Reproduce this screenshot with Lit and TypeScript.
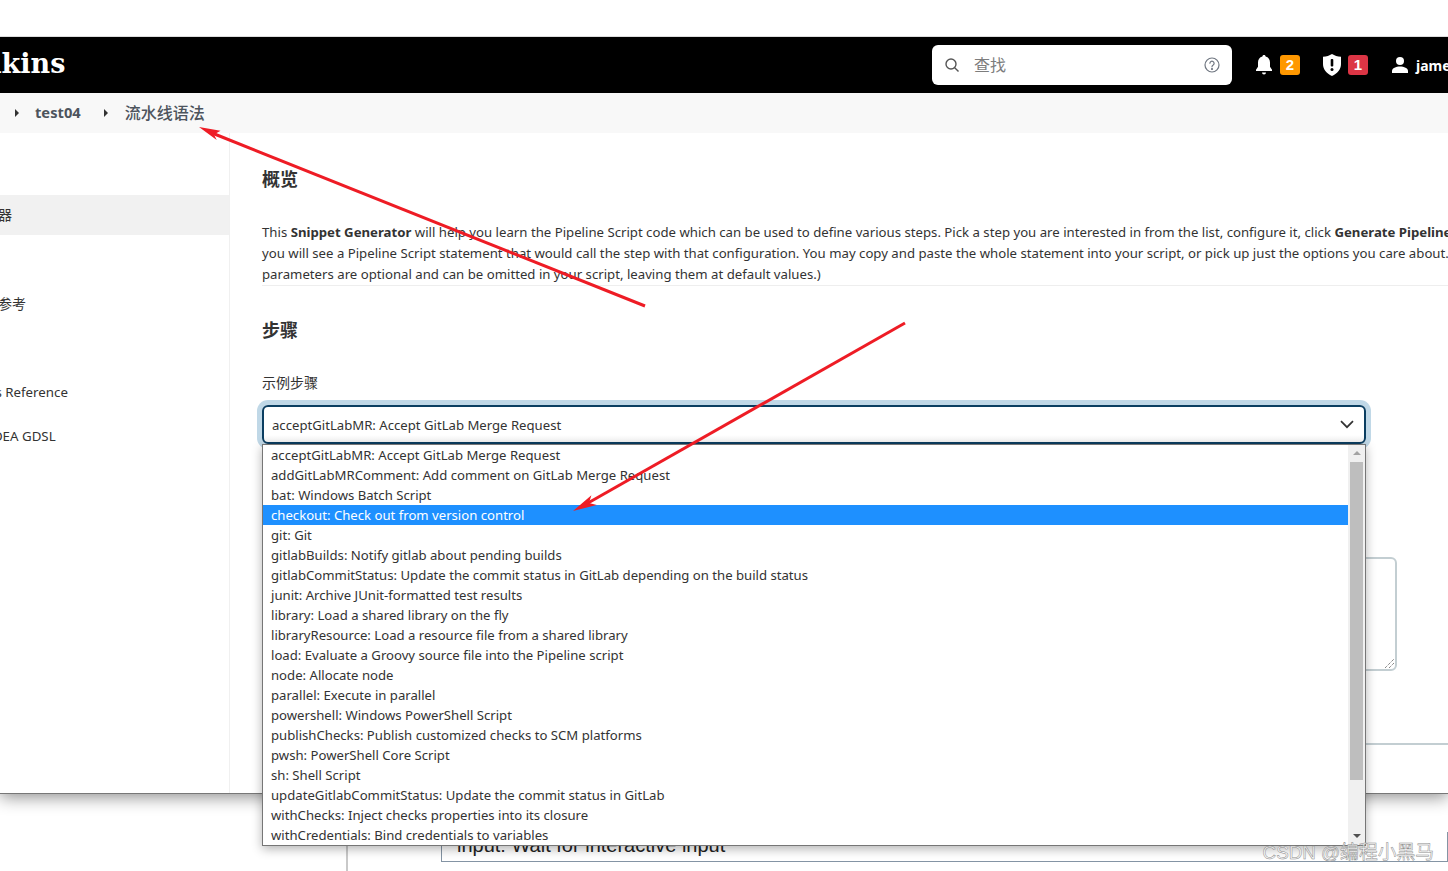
import { LitElement, html, css, svg } from "lit";
import { customElement } from "lit/decorators.js";

const STEPS = [
  "acceptGitLabMR: Accept GitLab Merge Request",
  "addGitLabMRComment: Add comment on GitLab Merge Request",
  "bat: Windows Batch Script",
  "checkout: Check out from version control",
  "git: Git",
  "gitlabBuilds: Notify gitlab about pending builds",
  "gitlabCommitStatus: Update the commit status in GitLab depending on the build status",
  "junit: Archive JUnit-formatted test results",
  "library: Load a shared library on the fly",
  "libraryResource: Load a resource file from a shared library",
  "load: Evaluate a Groovy source file into the Pipeline script",
  "node: Allocate node",
  "parallel: Execute in parallel",
  "powershell: Windows PowerShell Script",
  "publishChecks: Publish customized checks to SCM platforms",
  "pwsh: PowerShell Core Script",
  "sh: Shell Script",
  "updateGitlabCommitStatus: Update the commit status in GitLab",
  "withChecks: Inject checks properties into its closure",
  "withCredentials: Bind credentials to variables",
];

const SIDE = [
  { t: "", c: "" },
  { t: "片段生成器", c: "on" },
  { t: "步骤参考", c: "" },
  { t: "全局变量参考", c: "" },
  { t: "在线文档", c: "" },
  { t: "Examples Reference", c: "lat" },
  { t: "IntelliJ IDEA GDSL", c: "gdsl" },
];

@customElement("app-root")
export class AppRoot extends LitElement {
  static styles = css`
    :host {
      display: block;
      position: relative;
      width: 1448px;
      height: 871px;
      overflow: hidden;
      background: #fff;
      color: #333;
      font-family: "Noto Sans", "Noto Sans CJK SC", sans-serif;
      font-size: 13.15px;
    }
    .top { height: 36px; border-bottom: 1px solid #ddd; box-sizing: content-box; }
    header {
      height: 56px;
      background: #000;
      display: flex;
      align-items: center;
      color: #fff;
    }
    .logo {
      font-family: "DejaVu Serif", serif;
      font-weight: 700;
      font-size: 27px;
      margin-left: -48px;
      padding-bottom: 3px;
      white-space: nowrap;
    }
    .search {
      margin-left: auto;
      width: 300px;
      height: 40px;
      box-sizing: border-box;
      background: #fff;
      border-radius: 6px;
      display: flex;
      align-items: center;
      padding: 0 12px;
      gap: 14px;
      color: #7d7d7d;
      font-size: 16px;
    }
    .search .ph { flex: 1; font-family: "Noto Sans CJK SC", sans-serif; padding-bottom: 2px; }
    .notif { display: flex; align-items: center; gap: 7px; }
    .notif.a { margin-left: 23px; }
    .notif.b { margin-left: 22px; gap: 6px; }
    .badge {
      width: 20px;
      height: 20px;
      border-radius: 3px;
      color: #fff;
      font: 700 15px/20px "Liberation Sans", sans-serif;
      text-align: center;
    }
    .orange { background: #ff9800; }
    .red { background: #dc3545; }
    .user {
      margin-left: 23px;
      display: flex;
      align-items: center;
      gap: 7px;
      font: 700 14px "Noto Sans", sans-serif;
      white-space: nowrap;
      width: 57px;
      flex: none;
      overflow: hidden;
    }
    .crumbs {
      height: 40px;
      background: #f8f8f8;
      display: flex;
      align-items: center;
      color: #4d545d;
      padding-left: 15px;
    }
    .tri {
      width: 0;
      height: 0;
      border-left: 4px solid #333;
      border-top: 4px solid transparent;
      border-bottom: 4px solid transparent;
    }
    .crumbs b { font-size: 14.7px; font-weight: 700; margin: 0 23px 0 16px; padding-bottom: 2px; }
    .crumbs .cur { font: 500 16px "Noto Sans CJK SC", sans-serif; margin-left: 17px; padding-bottom: 2px; }
    main {
      height: 660px;
      display: flex;
      position: relative;
      z-index: 1;
      background: #fff;
      border-bottom: 1px solid #777;
      box-shadow: 0 3px 16px rgba(0, 0, 0, 0.45);
      clip-path: inset(0 0 -80px 0);
    }
    .side {
      width: 230px;
      flex: none;
      box-sizing: border-box;
      border-right: 1px solid #f0f0f0;
      overflow: hidden;
      padding-top: 18px;
      display: flex;
      flex-direction: column;
      gap: 4px;
    }
    .side div {
      height: 40px;
      line-height: 42px;
      white-space: nowrap;
      text-indent: -58px;
      font-size: 14px;
      font-family: "Noto Sans", "Noto Sans CJK SC", sans-serif;
    }
    .side div.on { background: #f1f1f1; line-height: 40px; }
    .side div.lat { font-size: 13.3px; }
    .side div.gdsl { font-size: 13.3px; text-indent: -54px; }
    .content { flex: 1; min-width: 0; padding: 31px 0 0 32px; }
    h2 {
      margin: 0;
      font: 700 18px/28px "Noto Sans CJK SC", sans-serif;
      color: #333;
    }
    p.desc {
      margin: 30px 0 0;
      font-size: 13.19px;
      line-height: 21px;
      white-space: nowrap;
      border-bottom: 1px solid #eee;
    }
    p.desc b { font-weight: 700; }
    h2.steps { margin-top: 29px; }
    label { display: block; margin-top: 29px; line-height: 20px; font-family: "Noto Sans CJK SC", sans-serif; font-size: 14px; }
    .wrap { position: relative; width: 1104px; margin-top: 13px; }
    .select {
      height: 39px;
      box-sizing: border-box;
      border: 2px solid #0b3e61;
      border-radius: 6px;
      box-shadow: 0 0 0 5px #c0d8e7;
      background: linear-gradient(#fff 80%, #f4f4f4);
      display: flex;
      align-items: center;
      justify-content: space-between;
      padding: 0 10px 0 8px;
    }
    .list {
      position: absolute;
      left: 0;
      top: 39px;
      width: 1104px;
      height: 402px;
      box-sizing: border-box;
      border: 1px solid #767676;
      background: #fff;
      display: flex;
      z-index: 3;
      box-shadow: 0 3px 10px rgba(0, 0, 0, 0.3);
    }
    .opts { flex: 1; min-width: 0; }
    .opt { height: 20px; line-height: 20px; padding-left: 8px; white-space: nowrap; }
    .opt.sel { background: #1e90ff; color: #fff; }
    .bar {
      width: 17px;
      flex: none;
      background: #f0f0f0;
      display: flex;
      flex-direction: column;
      align-items: center;
    }
    .bar .up, .bar .dn { width: 0; height: 0; border-left: 4px solid transparent; border-right: 4px solid transparent; }
    .bar .up { border-bottom: 4px solid #a3a3a3; margin-top: 6px; }
    .bar .dn { border-top: 4px solid #505050; margin-bottom: 7px; }
    .bar .thumb { width: 13px; height: 318px; background: #bebebe; margin: 7px 0 auto; }
    .ta {
      width: 1135px;
      height: 114px;
      box-sizing: border-box;
      margin-top: 113px;
      border: 2px solid #c3ced2;
      border-radius: 6px;
      position: relative;
    }
    .grip { position: absolute; right: 1px; bottom: 1px; }
    .rule { height: 2px; background: #c3ced2; margin-top: 72px; width: 1300px; }
    .foot {
      height: 77px;
      display: flex;
      align-items: flex-end;
      padding-left: 346px;
      box-sizing: border-box;
    }
    .vline { width: 2px; height: 77px; background: #c9c9c9; flex: none; }
    .box {
      margin-left: 93px;
      flex: 1;
      height: 30px;
      margin-bottom: 9px;
      box-sizing: border-box;
      border: 1px solid #8494a4;
      border-top: none;
      padding-left: 15px;
      font: 20px/26px "Liberation Sans", sans-serif;
      color: #222;
      overflow: hidden;
    }
    .arrows { position: absolute; inset: 0; pointer-events: none; z-index: 5; }
    .mark {
      position: absolute;
      right: 14px;
      bottom: 7px;
      z-index: 6;
      font: 18.800px "Liberation Sans", "Noto Sans CJK SC", sans-serif;
      color: rgba(255, 255, 255, 0.8);
      -webkit-text-stroke: 0.5px #8a8a8a;
      white-space: nowrap;
    }
  `;

  private arrow(x1: number, y1: number, x2: number, y2: number, head: string) {
    return svg`<line x1=${x1} y1=${y1} x2=${x2} y2=${y2} stroke="#ee1c25" stroke-width="3"/><polygon points=${head} fill="#ee1c25"/>`;
  }

  render() {
    return html`
      <div class="top"></div>
      <header>
        <div class="logo">Jenkins</div>
        <div class="search">
          <svg width="16" height="16" viewBox="0 0 16 16" fill="none" stroke="#555" stroke-width="1.4"><circle cx="7" cy="7" r="5"/><path d="M10.7 10.7 14.5 14.5"/></svg>
          <span class="ph">查找</span>
          <svg width="16" height="16" viewBox="0 0 16 16" fill="none" stroke="#6f7680" stroke-width="1.2"><circle cx="8" cy="8" r="7"/><path d="M5.9 6.2a2.1 2.1 0 1 1 3.3 1.8c-.8.5-1.2.9-1.2 1.8" stroke-linecap="round"/><circle cx="8" cy="12" r=".5" fill="#6f7680"/></svg>
        </div>
        <div class="notif a">
          <svg width="18" height="20" viewBox="0 0 18 20" fill="#fff"><path d="M9 0c1 0 1.600.7 1.600 1.600 2.900.7 4.400 3 4.400 6v4.200l2 3v1.200H1v-1.200l2-3V7.600c0-3 1.500-5.300 4.400-6C7.400.7 8 0 9 0Z"/><path d="M7 17.500h4a2 2 0 0 1-4 0Z"/></svg>
          <span class="badge orange">2</span>
        </div>
        <div class="notif b">
          <svg width="20" height="22" viewBox="0 0 20 22"><path fill="#fff" d="M10 0c2.600 1.600 5.500 2.500 9 2.800v7.200c0 5.300-3.500 9.500-9 12-5.500-2.500-9-6.700-9-12V2.800C4.500 2.500 7.400 1.600 10 0Z"/><rect x="8.700" y="5" width="2.600" height="7.500" rx="1" fill="#000"/><circle cx="10" cy="15.500" r="1.500" fill="#000"/></svg>
          <span class="badge red">1</span>
        </div>
        <div class="user">
          <svg width="18" height="18" viewBox="0 0 18 18" fill="#fff" style="flex:none"><circle cx="9" cy="5" r="4"/><path d="M1 17v-2c0-3 4-4.500 8-4.500s8 1.500 8 4.500v2Z"/></svg>
          <span>james</span>
        </div>
      </header>
      <nav class="crumbs">
        <span class="tri"></span><b>test04</b><span class="tri"></span><span class="cur">流水线语法</span>
      </nav>
      <main>
        <aside class="side">
          ${SIDE.map((s) => html`<div class=${s.c}>${s.t}</div>`)}
        </aside>
        <section class="content">
          <h2>概览</h2>
          <p class="desc">This <b>Snippet Generator</b> will help you learn the Pipeline Script code which can be used to define various steps. Pick a step you are interested in from the list, configure it, click <b>Generate Pipeline Script</b>, and<br />you will see a Pipeline Script statement that would call the step with that configuration. You may copy and paste the whole statement into your script, or pick up just the options you care about. (Most<br />parameters are optional and can be omitted in your script, leaving them at default values.)</p>
          <h2 class="steps">步骤</h2>
          <label>示例步骤</label>
          <div class="wrap">
            <div class="select">
              <span>${STEPS[0]}</span>
              <svg width="14" height="9" viewBox="0 0 14 9" fill="none" stroke="#333" stroke-width="1.7"><path d="M1 1.200 7 7.200 13 1.200"/></svg>
            </div>
            <div class="list">
              <div class="opts">
                ${STEPS.map((s, i) => html`<div class="opt ${i === 3 ? "sel" : ""}">${s}</div>`)}
              </div>
              <div class="bar"><span class="up"></span><span class="thumb"></span><span class="dn"></span></div>
            </div>
          </div>
          <div class="ta">
            <svg class="grip" width="9" height="9" viewBox="0 0 9 9" stroke="#555" stroke-width="1" stroke-dasharray="1 1"><path d="M0 9 9 0M4 9 9 4"/></svg>
          </div>
          <div class="rule"></div>
        </section>
      </main>
      <div class="foot">
        <span class="vline"></span>
        <div class="box">input: Wait for interactive input</div>
      </div>
      <svg class="arrows" width="1448" height="871" viewBox="0 0 1448 871">
        ${this.arrow(645, 306, 212, 133, "199,127 220.5,130.8 214,134.5 216.7,140")}
        ${this.arrow(905, 323, 588, 503, "573,511 591.4,495.3 589,503 596.8,504.9")}
      </svg>
      <div class="mark">CSDN @编程小黑马</div>
    `;
  }
}
